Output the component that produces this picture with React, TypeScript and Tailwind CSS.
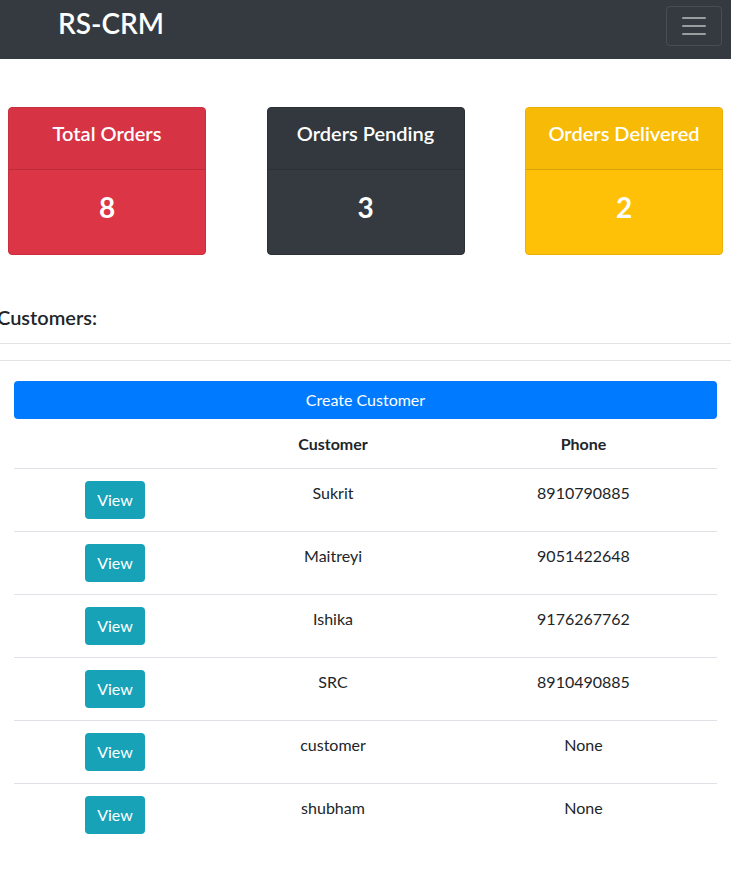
import React from "react";

const customers = [
  { name: "Sukrit", phone: "8910790885" },
  { name: "Maitreyi", phone: "9051422648" },
  { name: "Ishika", phone: "9176267762" },
  { name: "SRC", phone: "8910490885" },
  { name: "customer", phone: "None" },
  { name: "shubham", phone: "None" },
];

function StatCard({ title, value, body, head, border }: { title: string; value: string; body: string; head: string; border: string }) {
  return (
    <div className={`w-[198px] h-[148px] rounded-[4px] border ${border} ${body} text-white flex flex-col overflow-hidden`}>
      <div className={`h-[62px] pt-[13px] text-center border-b border-black/[0.125] ${head}`}>
        <h5 className="text-[20px] font-semibold leading-[24px]">{title}</h5>
      </div>
      <div className="flex-1 pt-[20px] text-center">
        <h3 className="text-[28px] font-bold leading-[34px]">{value}</h3>
      </div>
    </div>
  );
}

export default function App() {
  return (
    <div className="min-h-[882px] bg-white text-[#212529] text-[16px]" style={{ fontFamily: "Lato, 'Open Sans', sans-serif" }}>
      <nav className="h-[59px] bg-[#343a40] flex items-start justify-between pl-[58px] pr-[9px]">
        <span className="text-white text-[28px] font-semibold leading-[34px] mt-[6px]">RS-CRM</span>
        <button className="mt-[6px] w-[56px] h-[40px] border border-white/10 rounded-[4px] flex items-center justify-center">
          <svg width="30" height="30" viewBox="0 0 30 30">
            <path d="M4 7h22M4 15h22M4 23h22" stroke="rgba(255,255,255,0.5)" strokeWidth="2" strokeLinecap="round" />
          </svg>
        </button>
      </nav>

      <div className="flex justify-between pl-[8px] pr-[8px] pt-[48px]">
        <StatCard title="Total Orders" value="8" body="bg-[#dc3545]" head="bg-[#d63344]" border="border-[#c8303f]" />
        <StatCard title="Orders Pending" value="3" body="bg-[#343a40]" head="bg-[#32383e]" border="border-[#2c3136]" />
        <StatCard title="Orders Delivered" value="2" body="bg-[#ffc107]" head="bg-[#f7bb07]" border="border-[#e8b006]" />
      </div>

      <div className="mt-[50px] -ml-[3px] text-[20px] font-semibold leading-[24px]">Customers:</div>
      <hr className="mt-[14px] border-t border-[#e3e3e3]" />
      <hr className="mt-[16px] border-t border-[#e3e3e3]" />

      <div className="px-[14px] pt-[20px]">
        <button className="w-full h-[38px] bg-[#007bff] text-white rounded-[4px] text-[16px] leading-[24px]">Create Customer</button>
        <table className="w-full border-collapse mt-px">
          <thead>
            <tr className="h-[48px]">
              <th className="w-[202px]"></th>
              <th className="w-[234px] font-bold text-center align-middle">Customer</th>
              <th className="font-bold text-center align-middle">Phone</th>
            </tr>
          </thead>
          <tbody>
            {customers.map((c) => (
              <tr key={c.name} className="border-t border-[#dee2e6]">
                <td className="py-[12px] text-center align-top">
                  <button className="w-[60px] h-[38px] bg-[#17a2b8] text-white rounded-[4px] leading-[24px]">View</button>
                </td>
                <td className="py-[12px] text-center align-top leading-[24px]">{c.name}</td>
                <td className="py-[12px] text-center align-top leading-[24px]">{c.phone}</td>
              </tr>
            ))}
          </tbody>
        </table>
      </div>
    </div>
  );
}
